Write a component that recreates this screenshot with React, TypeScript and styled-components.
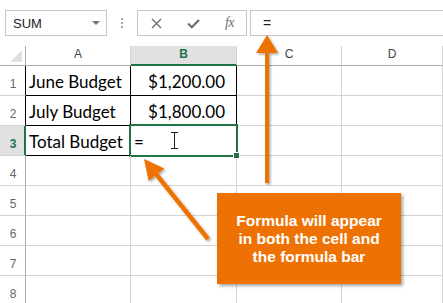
import React from 'react';
import styled, { createGlobalStyle, css } from 'styled-components';

const GREEN = '#217346';
const ORANGE = '#ee7203';

const GlobalStyle = createGlobalStyle`
  html, body {
    margin: 0;
    padding: 0;
    background: #ffffff;
  }
  body {
    font-family: "Liberation Sans", Arial, sans-serif;
  }
`;

const Page = styled.div`
  position: relative;
  width: 443px;
  height: 303px;
  overflow: hidden;
  background: #ffffff;
`;

const Toolbar = styled.div`
  display: flex;
  align-items: stretch;
  height: 26px;
  padding: 10px 0 10px 5px;
`;

const NameBox = styled.div`
  box-sizing: border-box;
  width: 102px;
  display: flex;
  align-items: center;
  justify-content: space-between;
  padding: 0 6px 0 7px;
  border: 1px solid #c6c6c6;
  font-size: 13px;
  color: #222;
`;

const DropArrow = styled.span`
  width: 0;
  height: 0;
  border-left: 4px solid transparent;
  border-right: 4px solid transparent;
  border-top: 4px solid #777;
`;

const Grip = styled.div`
  width: 30px;
  display: flex;
  justify-content: center;
  align-items: center;

  &::before {
    content: '';
    width: 2px;
    height: 11px;
    background: repeating-linear-gradient(to bottom, #a6a6a6 0 2px, transparent 2px 4px);
  }
`;

const FormulaButtons = styled.div`
  box-sizing: border-box;
  width: 110px;
  display: flex;
  align-items: center;
  justify-content: space-between;
  padding: 0 12px 0 13px;
  border: 1px solid #c6c6c6;
  color: #6e6e6e;
`;

const Fx = styled.span`
  font-family: "Liberation Serif", "Times New Roman", serif;
  font-style: italic;
  font-size: 14px;
  color: #6e6e6e;
  letter-spacing: -0.5px;
`;

const FormulaBar = styled.div`
  box-sizing: border-box;
  flex: 1;
  margin-left: 3px;
  margin-right: -4px;
  display: flex;
  align-items: center;
  padding-left: 12px;
  border: 1px solid #c6c6c6;
  font-size: 14px;
  color: #222;
`;

const Sheet = styled.div`
  display: grid;
  grid-template-columns: 26px 105px 106px 105px 1fr;
  grid-template-rows: 20px;
  grid-auto-rows: 30px;
`;

const Cell = styled.div<{ $right?: string; $bottom?: string }>`
  box-sizing: border-box;
  position: relative;
  border-right: 1px solid ${(p) => p.$right || '#d4d4d4'};
  border-bottom: 1px solid ${(p) => p.$bottom || '#d4d4d4'};
`;

const Corner = styled(Cell)`
  border-right-color: #ababab;
  border-bottom-color: #ababab;

  &::after {
    content: '';
    position: absolute;
    right: 3px;
    bottom: 3px;
    width: 0;
    height: 0;
    border-left: 12px solid transparent;
    border-bottom: 12px solid #dfdfdf;
  }
`;

const ColHead = styled(Cell)<{ $active?: boolean }>`
  display: flex;
  align-items: center;
  justify-content: center;
  padding-bottom: 3px;
  border-bottom-color: #ababab;
  font-size: 12px;
  color: #444;
  ${(p) =>
    p.$active &&
    css`
      background: #e1e1e1;
      color: ${GREEN};
      font-weight: bold;
      border-bottom: 2px solid ${GREEN};
      padding-bottom: 2px;
    `}
`;

const RowHead = styled(Cell)<{ $active?: boolean }>`
  display: flex;
  align-items: flex-end;
  justify-content: center;
  padding-bottom: 4px;
  padding-left: 1px;
  font-size: 12px;
  color: #666;
  border-right-color: ${(p) => p.$right || '#ababab'};
  ${(p) =>
    p.$active &&
    css`
      background: #e1e1e1;
      color: ${GREEN};
      font-weight: bold;
      box-shadow: inset -1px 0 0 ${GREEN};
    `}
`;

const DataCell = styled(Cell)<{ $align?: 'left' | 'right' }>`
  display: flex;
  align-items: flex-end;
  justify-content: ${(p) => (p.$align === 'right' ? 'flex-end' : 'flex-start')};
  padding: 0 ${(p) => (p.$align === 'right' ? '11px' : '0')} 3px 3px;
  font-family: Lato, "Liberation Sans", sans-serif;
  font-size: 17px;
  color: #000;
  white-space: nowrap;
`;

const Selected = styled(DataCell)`
  &::after {
    content: '';
    position: absolute;
    left: -2px;
    top: -2px;
    right: -2px;
    bottom: -2px;
    border: 2px solid ${GREEN};
    pointer-events: none;
  }
`;

const FillHandle = styled.span`
  position: absolute;
  right: -3px;
  bottom: -3px;
  width: 5px;
  height: 5px;
  background: ${GREEN};
  box-shadow: 0 0 0 1px #fff;
  z-index: 1;
`;

const IBeam = styled.span`
  position: absolute;
  left: 43px;
  top: 6px;
  width: 1px;
  height: 17px;
  background: #222;

  &::before,
  &::after {
    content: '';
    position: absolute;
    left: -3px;
    width: 7px;
    height: 1px;
    background: #222;
  }
  &::before {
    top: 0;
  }
  &::after {
    bottom: 0;
  }
`;

const Callout = styled.div`
  position: absolute;
  left: 217px;
  top: 193px;
  width: 184px;
  height: 91px;
  display: flex;
  align-items: center;
  justify-content: center;
  text-align: center;
  background: ${ORANGE};
  color: #fff;
  font-weight: bold;
  font-size: 15.5px;
  line-height: 18px;
  box-shadow: 2px 2px 3px rgba(0, 0, 0, 0.35);
`;

const Arrows = styled.svg`
  position: absolute;
  left: 0;
  top: 0;
  pointer-events: none;
`;

const CrossIcon = () => (
  <svg width="11" height="11" viewBox="0 0 11 11">
    <path d="M1 1 L10 10 M10 1 L1 10" stroke="#6e6e6e" strokeWidth="1.4" fill="none" />
  </svg>
);

const CheckIcon = () => (
  <svg width="13" height="11" viewBox="0 0 13 11">
    <path d="M1 5.5 L4.8 9.3 L12 2" stroke="#6e6e6e" strokeWidth="2.2" fill="none" />
  </svg>
);

const cols = ['A', 'B', 'C', 'D'];

const rows: { a?: string; b?: string }[] = [
  { a: 'June Budget', b: '$1,200.00' },
  { a: 'July Budget', b: '$1,800.00' },
  { a: 'Total Budget', b: '=' },
  {},
  {},
  {},
  {},
  {},
];

const App = () => {
  return (
    <Page>
      <GlobalStyle />
      <Toolbar>
        <NameBox>
          SUM
          <DropArrow />
        </NameBox>
        <Grip />
        <FormulaButtons>
          <CrossIcon />
          <CheckIcon />
          <Fx>fx</Fx>
        </FormulaButtons>
        <FormulaBar>=</FormulaBar>
      </Toolbar>

      <Sheet>
        <Corner />
        {cols.map((c) => (
          <ColHead key={c} $active={c === 'B'}>
            {c}
          </ColHead>
        ))}

        {rows.map((r, i) => {
          const n = i + 1;
          const boxed = n <= 3;
          return (
            <React.Fragment key={n}>
              <RowHead
                $active={n === 3}
                $right={n === 3 ? GREEN : boxed ? '#000' : undefined}
              >
                {n}
              </RowHead>
              <DataCell $right={boxed ? '#000' : undefined} $bottom={boxed ? '#000' : undefined}>
                {r.a}
              </DataCell>
              {n === 3 ? (
                <Selected>
                  {r.b}
                  <IBeam />
                  <FillHandle />
                </Selected>
              ) : (
                <DataCell
                  $align="right"
                  $right={boxed ? '#000' : undefined}
                  $bottom={boxed ? '#000' : undefined}
                >
                  {r.b}
                </DataCell>
              )}
              <DataCell />
              <DataCell />
            </React.Fragment>
          );
        })}
      </Sheet>

      <Arrows width="443" height="303" viewBox="0 0 443 303">
        <defs>
          <filter id="shade" x="-20%" y="-20%" width="140%" height="140%">
            <feDropShadow dx="1.5" dy="1.5" stdDeviation="1.2" floodColor="#000" floodOpacity="0.35" />
          </filter>
        </defs>
        <g fill={ORANGE} filter="url(#shade)">
          <polygon points="267,35 278,53 269,53 269,183 265,183 265,53 256,53" />
          <polygon points="144,159 164.3,168.4 158.2,173.2 209.7,237.6 206.3,240.4 154.8,176 148.7,180.9" />
        </g>
      </Arrows>

      <Callout>
        Formula will appear
        <br />
        in both the cell and
        <br />
        the formula bar
      </Callout>
    </Page>
  );
};

export default App;
